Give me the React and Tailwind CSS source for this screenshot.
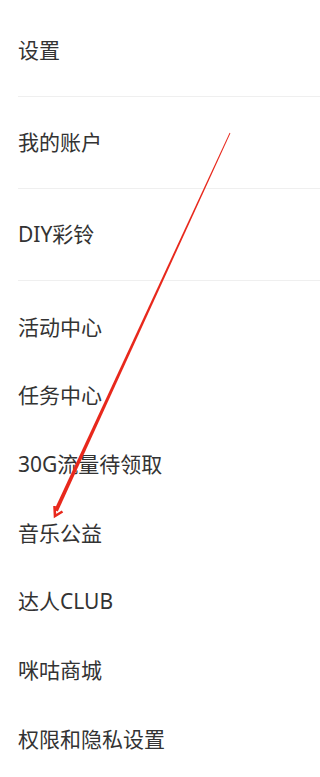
export default function App() {
  const topItems = ['设置', '我的账户', 'DIY彩铃'];
  const items = ['活动中心', '任务中心', '30G流量待领取', '音乐公益', '达人CLUB', '咪咕商城', '权限和隐私设置'];

  return (
    <div
      className="relative w-full h-[777px] overflow-hidden bg-white text-[#333333]"
      style={{ fontFamily: '"Noto Sans", "Noto Sans CJK SC", sans-serif' }}
    >
      <div className="pt-[5px]">
        {topItems.map((t) => (
          <div key={t} className="ml-[18px] h-[92px] flex items-center border-b border-[#efefef] text-[21px]">
            {t}
          </div>
        ))}
      </div>
      <div className="pt-[12px]">
        {items.map((t) => (
          <div key={t} className="pl-[18px] h-[68.67px] flex items-center text-[21px]">
            {t}
          </div>
        ))}
      </div>

      {/* red annotation arrow */}
      <svg className="absolute left-0 top-0 pointer-events-none" width="264" height="777" viewBox="0 0 264 777">
        <polygon points="229.6,132.7 230.4,133.3 57.8,511.5 54.2,510.1" fill="#e8281c" />
        <polyline points="54.5,506 55,516 62.5,511.5" fill="none" stroke="#e8281c" strokeWidth="2.6" strokeLinejoin="miter" />
      </svg>
    </div>
  );
}
